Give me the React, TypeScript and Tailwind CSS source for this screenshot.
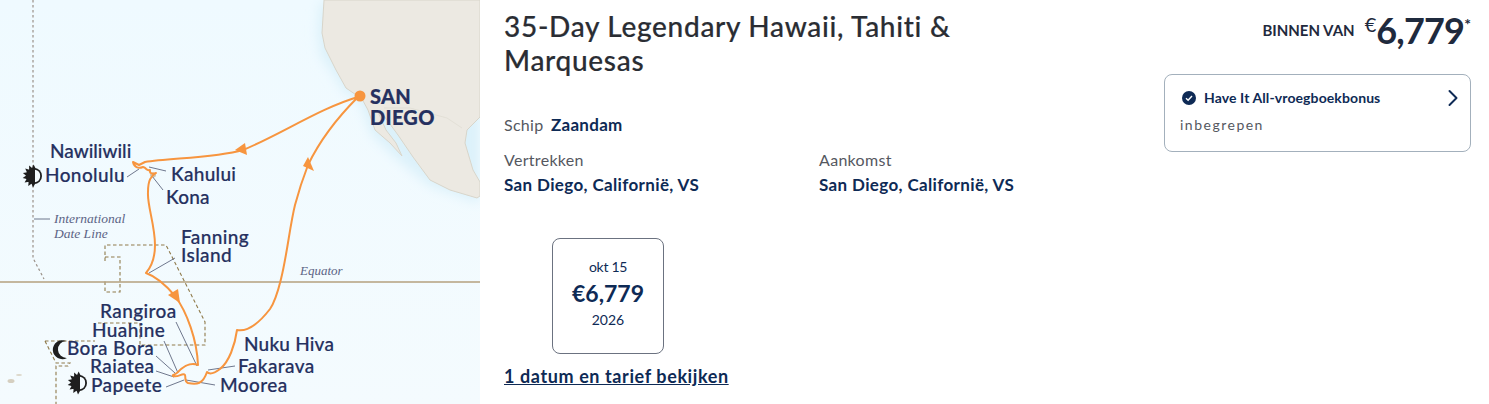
import { ChevronRight } from "lucide-react";

const font = { fontFamily: "Lato, sans-serif" };

interface PlaceProps {
  x: number;
  y: number;
  children: string;
  size?: number;
  weight?: number;
  spacing?: number;
}

function Place({ x, y, children, size = 19, weight = 500, spacing = 0.4 }: PlaceProps) {
  return (
    <text
      x={x}
      y={y}
      fontSize={size}
      fontWeight={weight}
      fill="#25305f"
      stroke="#25305f"
      strokeWidth="0.2"
      letterSpacing={spacing}
      style={font}
    >
      {children}
    </text>
  );
}

function SunIcon({ x, y }: { x: number; y: number }) {
  const spikes = [95, 120, 145, 170, 195, 220, 245, 268];
  return (
    <g transform={`translate(${x} ${y})`}>
      {spikes.map((a) => (
        <path key={a} d="M6 -2.6 L11.5 0 L6 2.6 Z" fill="#1e1e1e" transform={`rotate(${a})`} />
      ))}
      <circle r="8" fill="#1e1e1e" />
      <path d="M1 -6.2 A6.3 6.3 0 0 1 1 6.2 Z" fill="#f4fbfe" />
    </g>
  );
}

function RouteMap() {
  return (
    <svg width="480" height="404" viewBox="0 0 480 404" className="block">
      <defs>
        <linearGradient id="sea" x1="0" y1="0" x2="0" y2="1">
          <stop offset="0" stopColor="#effaff" />
          <stop offset="1" stopColor="#f4fbfe" />
        </linearGradient>
        <filter id="glow" x="-30%" y="-30%" width="160%" height="160%">
          <feGaussianBlur stdDeviation="6" />
        </filter>
        <filter id="soft" x="-10%" y="-10%" width="120%" height="120%">
          <feGaussianBlur stdDeviation="0.5" />
        </filter>
      </defs>
      <rect width="480" height="404" fill="url(#sea)" />

      {/* land */}
      <path
        d="M320 0 L318 33 L321 57 L333 73 L343 90 L360 102 L372 135 L398 160 L430 186 L476 202 L480 202 L480 100 Z"
        fill="#dcf1fa"
        filter="url(#glow)"
      />
      <g filter="url(#soft)">
        <path
          d="M324 0 L322 33 L325 48 L336 70 L346 88 L362 99 L368 110 L375 130 L390 143 L402 156 L396 143 L386 130 L378 112 L384 116 L398 135 L413 157 L430 180 L450 190 L477 198 L480 196 L480 182 L473 170 L465 143 L467 130 L480 117 L480 0 Z"
          fill="#ece9e2"
          stroke="#d8d5ca"
          strokeWidth="1"
        />
        <path d="M384 108 L410 108 L447 118 L462 128" fill="none" stroke="#dedbd1" strokeWidth="0.7" />
      </g>

      {/* date line, borders */}
      <path d="M33 0 V258 L44 279" fill="none" stroke="#9a9088" strokeWidth="1.2" strokeDasharray="2.5 2.5" />
      <path
        d="M105 261 V245 H166 L205 322 V345 H141 M105 257 H120 V292 H105 V281"
        fill="none"
        stroke="#8f7a4a"
        strokeWidth="1.1"
        strokeDasharray="3.5 2.5"
      />
      <path
        d="M98 323 H140 V345 M45 341 H95 M45 341 L56 363 H70 L68 366 H56 V404"
        fill="none"
        stroke="#8f7a4a"
        strokeWidth="1.1"
        strokeDasharray="3.5 2.5"
      />
      <path d="M0 282 H480" stroke="#b5a07e" strokeWidth="1.6" />
      <ellipse cx="11" cy="381" rx="3.5" ry="2" fill="#d5cfc0" />
      <ellipse cx="19" cy="375" rx="3" ry="1" fill="#dcd7ca" />
      <ellipse cx="153" cy="175" rx="3" ry="2.5" fill="#c9c8b8" />

      {/* leader lines */}
      <g fill="none" stroke="#4d5570" strokeWidth="0.8">
        <path d="M127 177 L139 169 M149 167 L166 171 M152 176 L163 190" />
        <path d="M34 219 H50" />
        <path d="M149 273 L175 258" />
        <path d="M176 322 L197 366 M164 341 L178 373 M156 356 L175 373 M156 371 L174 377 M166 387 L184 380 M186 380 L215 385 M208 370 L235 366" />
      </g>

      {/* route */}
      <path
        d="M358 97 C320 108 280 135 243 150 C215 158 170 158 145 162 L139 165 L133 162 C134 167 138 169 143 167 C147 168 146 171 150 170 C149 174 153 174 156 173 C151 176 148 180 148 192 C147 205 155 225 155 245 C155 258 152 266 146 273 C160 278 170 290 175 296 C187 312 197 340 198 365 C190 362 184 366 178 372 C176 375 172 374 173 376 C178 378 183 372 185 375 C186 378 184 381 188 383 C197 385 203 384 207 372 C210 375 216 372 220 369 C229 362 235 345 237 330 C248 332 260 322 270 309 C276 300 279 287 281 279 C287 255 290 225 295 205 C299 190 303 178 308 165 C320 140 340 115 358 97"
        fill="none"
        stroke="#f7953f"
        strokeWidth="2"
        strokeLinejoin="round"
        strokeLinecap="round"
      />
      <path d="M235 150 L245 143 L247 155 Z" fill="#f7953f" />
      <path d="M303 166 L308 157 L314 171 Z" fill="#f7953f" />
      <path d="M168 295 L178 289 L180 303 Z" fill="#f7953f" />
      <circle cx="360" cy="96" r="5.5" fill="#f7953f" />

      {/* labels */}
      <Place x={50} y={158} spacing={0}>Nawiliwili</Place>
      <Place x={45} y={182}>Honolulu</Place>
      <Place x={171} y={181} spacing={0.3}>Kahului</Place>
      <Place x={166} y={204} spacing={0.2}>Kona</Place>
      <Place x={181} y={244}>Fanning</Place>
      <Place x={181} y={262}>Island</Place>
      <Place x={100} y={318}>Rangiroa</Place>
      <Place x={92} y={337}>Huahine</Place>
      <Place x={67} y={355}>Bora Bora</Place>
      <Place x={90} y={373}>Raiatea</Place>
      <Place x={91} y={392}>Papeete</Place>
      <Place x={244} y={351} spacing={0.2}>Nuku Hiva</Place>
      <Place x={238} y={373}>Fakarava</Place>
      <Place x={220} y={392}>Moorea</Place>
      <Place x={370} y={104} size={20} weight={900} spacing={0.3}>SAN</Place>
      <Place x={370} y={125} size={20} weight={900} spacing={0.3}>DIEGO</Place>

      <g fontFamily="'Liberation Serif', serif" fontStyle="italic" fontSize="13.5" fill="#5c6485">
        <text x={54} y={223}>International</text>
        <text x={54} y={238}>Date Line</text>
        <text x={300} y={275} fontSize="13">Equator</text>
      </g>

      <SunIcon x={34} y={176} />
      <SunIcon x={79} y={383} />
      <path d="M66 341 A9.5 9.5 0 1 0 67 358 A8.5 8.5 0 1 1 66 341 Z" fill="#1e1e1e" />
    </svg>
  );
}

export default function App() {
  return (
    <div className="flex w-[1489px] h-[404px] overflow-hidden bg-white text-[#0e2a55]" style={font}>
      <div className="w-[480px] shrink-0">
        <RouteMap />
      </div>

      {/* Details */}
      <div className="w-[660px] shrink-0 pl-6 pt-[9px]">
        <h2 className="w-[480px] text-[28px] leading-[34px] font-medium tracking-[0.7px] text-[#2a2d33] [-webkit-text-stroke:0.2px]">
          35-Day Legendary Hawaii, Tahiti &amp; Marquesas
        </h2>
        <p className="mt-[36px] text-base leading-6 tracking-[0.3px] text-[#55585f]">
          Schip <span className="ml-[3px] text-[17px] font-bold text-[#0e2a55]">Zaandam</span>
        </p>
        <div className="mt-[11px] grid grid-cols-[315px_1fr]">
          <div>
            <p className="text-base leading-6 tracking-[0.3px] text-[#55585f]">Vertrekken</p>
            <p className="mt-[1px] text-[17px] leading-6 tracking-[0.36px] font-bold text-[#0e2a55]">San Diego, Californië, VS</p>
          </div>
          <div>
            <p className="text-base leading-6 tracking-[0.3px] text-[#55585f]">Aankomst</p>
            <p className="mt-[1px] text-[17px] leading-6 tracking-[0.36px] font-bold text-[#0e2a55]">San Diego, Californië, VS</p>
          </div>
        </div>
        <div className="ml-12 mt-[41px] flex h-[116px] w-28 flex-col items-center rounded-lg border border-[#6b7280] pt-[18px]">
          <span className="text-sm leading-5 tracking-[-0.3px]">okt 15</span>
          <span className="mt-0 text-[23px] leading-8 font-bold">€6,779</span>
          <span className="mt-[1px] text-sm leading-5">2026</span>
        </div>
        <a className="mt-[10px] block text-lg leading-6 font-bold tracking-[0.6px] underline">1 datum en tarief bekijken</a>
      </div>

      {/* Price */}
      <div className="w-[307px] shrink-0 ml-6">
        <div className="flex items-start justify-end pt-3">
          <span className="mt-[8px] mr-[10px] text-[15px] leading-5 font-bold text-[#1f2a3d]">BINNEN VAN</span>
          <span className="text-xl leading-6 text-[#1f2a3d]">€</span>
          <span className="text-[36px] leading-9 tracking-[-0.8px] font-bold text-[#1f2a3d]">6,779</span>
          <span className="mt-[4px] text-base leading-4 font-bold text-[#1f2a3d]">*</span>
        </div>
        <div className="mt-[26px] h-[78px] rounded-lg border border-[#a3b0bc] px-[15px] pt-[13px]">
          <div className="flex items-center">
            <svg width="14" height="14" viewBox="0 0 14 14" className="ml-[2px] mr-2 shrink-0">
              <circle cx="7" cy="7" r="7" fill="#0e2a55" />
              <path d="M4 7.3 L6.1 9.2 L10 5" fill="none" stroke="#fff" strokeWidth="1.4" />
            </svg>
            <span className="text-[14px] leading-5 tracking-[0.1px] font-bold">Have It All-vroegboekbonus</span>
            <ChevronRight className="ml-auto -my-1 -mr-[12px] size-7" strokeWidth={1.7} />
          </div>
          <p className="mt-[7px] text-sm leading-5 tracking-[1.5px] text-[#55585f]">inbegrepen</p>
        </div>
      </div>
    </div>
  );
}
